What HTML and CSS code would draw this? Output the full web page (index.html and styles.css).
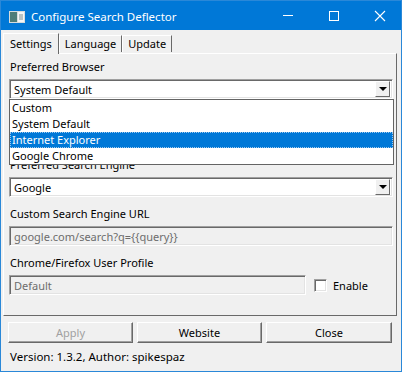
FILE: index.html
```html
<!DOCTYPE html>
<html lang="en">

<head>
    <meta charset="UTF-8">
    <meta name="viewport" content="width=device-width, initial-scale=1.0">
    <title>Configure Search Deflector</title>
    <link rel="stylesheet" href="styles.css">
</head>

<body>
    <div class="window">
        <div class="titlebar">
            <svg class="app-icon" width="16" height="12" viewBox="0 0 16 12">
                <rect x="0" y="0" width="16" height="12" fill="#d6dcdc" />
                <rect x="1" y="1" width="7" height="10" fill="#4d7d78" />
                <rect x="9" y="1" width="6" height="10" fill="#f4f6f6" />
                <rect x="10" y="3" width="4" height="6" fill="#b9c3c3" />
            </svg>
            <span class="title">Configure Search Deflector</span>
            <div class="controls">
                <svg width="46" height="30" viewBox="0 0 46 30">
                    <line x1="18" y1="14.5" x2="28" y2="14.5" stroke="#fff" stroke-width="1" />
                </svg>
                <svg width="46" height="30" viewBox="0 0 46 30">
                    <rect x="18.5" y="10.5" width="9" height="9" fill="none" stroke="#fff" stroke-width="1" />
                </svg>
                <svg width="46" height="30" viewBox="0 0 46 30">
                    <path d="M18 10 L28 20 M28 10 L18 20" stroke="#fff" stroke-width="1.1" />
                </svg>
            </div>
        </div>

        <div class="content">
            <div class="tabs">
                <div class="tab active">Settings</div>
                <div class="tab">Language</div>
                <div class="tab">Update</div>
            </div>

            <div class="panel">
                <div class="field browser">
                    <label>Preferred Browser</label>
                    <div class="combo">
                        <span>System Default</span>
                        <span class="drop-btn"></span>
                    </div>
                    <ul class="dropdown">
                        <li>Custom</li>
                        <li>System Default</li>
                        <li class="selected">Internet Explorer</li>
                        <li>Google Chrome</li>
                    </ul>
                </div>

                <div class="field">
                    <label>Preferred Search Engine</label>
                    <div class="combo">
                        <span>Google</span>
                        <span class="drop-btn"></span>
                    </div>
                </div>

                <div class="field">
                    <label>Custom Search Engine URL</label>
                    <div class="textbox disabled">google.com/search?q={{query}}</div>
                </div>

                <div class="field">
                    <label>Chrome/Firefox User Profile</label>
                    <div class="profile-row">
                        <div class="textbox disabled">Default</div>
                        <div class="check">
                            <span class="checkbox"></span>
                            <span>Enable</span>
                        </div>
                    </div>
                </div>
            </div>

            <div class="buttons">
                <button class="btn" disabled>Apply</button>
                <button class="btn">Website</button>
                <button class="btn">Close</button>
            </div>

            <div class="footer">Version: 1.3.2, Author: spikespaz</div>
        </div>
    </div>
</body>

</html>
```

FILE: styles.css
```css
body {
    margin: 0;
    padding: 0;
    font-family: "Noto Sans", "Open Sans", sans-serif;
    font-size: 11px;
    color: #000;
}

.window {
    width: 402px;
    height: 372px;
    box-sizing: border-box;
    border: 1px solid #2a88d8;
    background-color: #f0f0f0;
    display: flex;
    flex-direction: column;
}

.titlebar {
    height: 29px;
    background-color: #0078d7;
    display: flex;
    align-items: center;
    color: #fff;
}

.app-icon {
    margin-left: 8px;
    margin-right: 6px;
    margin-top: 2px;
}

.title {
    flex: 1;
    font-size: 11.5px;
    margin-top: 1px;
}

.controls {
    display: flex;
    margin-right: -2px;
}

.controls svg {
    display: block;
}

.content {
    padding: 3px 4px 0 2px;
    display: flex;
    flex-direction: column;
}

.tabs {
    display: flex;
    align-items: flex-end;
    height: 20px;
    position: relative;
    z-index: 1;
}

.tab {
    height: 17px;
    line-height: 16px;
    padding: 0 5px;
    box-sizing: border-box;
    border-top: 1px solid #fff;
    border-left: 1px solid #fff;
    border-right: 1px solid #696969;
    margin-bottom: 1px;
}

.tab.active {
    height: 21px;
    line-height: 19px;
    padding: 0 6px 0 6px;
    margin-bottom: -1px;
    background-color: #f0f0f0;
}

.panel {
    height: 263px;
    box-sizing: border-box;
    border: 1px solid;
    border-color: #fff #696969 #696969 #fff;
    padding: 5px 3px 0 5px;
    display: flex;
    flex-direction: column;
    gap: 9px;
}

.field {
    display: flex;
    flex-direction: column;
    gap: 4px;
    position: relative;
}

.field.browser {
    margin-bottom: 49px;
}

.field label {
    line-height: 16px;
    height: 16px;
    padding-left: 1px;
}

.combo,
.textbox {
    height: 20px;
    box-sizing: border-box;
    border: 1px solid;
    border-color: #a0a0a0 #fff #fff #a0a0a0;
    box-shadow: inset 1px 1px #696969, inset -1px -1px #e3e3e3;
    background-color: #fff;
    display: flex;
    align-items: center;
    padding-left: 4px;
}

.combo {
    justify-content: space-between;
    padding-right: 2px;
}

.drop-btn {
    width: 15px;
    height: 16px;
    box-sizing: border-box;
    border: 1px solid;
    border-color: #fff #696969 #696969 #fff;
    background-color: #f0f0f0;
    position: relative;
}

.drop-btn::after {
    content: "";
    position: absolute;
    left: 3px;
    top: 5px;
    border-left: 4px solid transparent;
    border-right: 4px solid transparent;
    border-top: 4px solid #000;
}

.textbox.disabled {
    background-color: #f0f0f0;
    color: #6d6d6d;
}

.dropdown {
    position: absolute;
    left: 0;
    right: -1px;
    top: 40px;
    margin: 0;
    padding: 0;
    list-style: none;
    background-color: #fff;
    border: 1px solid #646464;
    z-index: 2;
}

.dropdown li {
    height: 16px;
    line-height: 15px;
    padding-left: 2px;
}

.dropdown li.selected {
    background-color: #0078d7;
    color: #fff;
    outline: 1px dotted #9ec9ee;
    outline-offset: -1px;
}

.profile-row {
    display: flex;
    align-items: center;
}

.profile-row .textbox {
    width: 297px;
}

.check {
    display: flex;
    align-items: center;
    gap: 6px;
    margin-left: 8px;
}

.checkbox {
    width: 13px;
    height: 13px;
    box-sizing: border-box;
    border: 1px solid;
    border-color: #a0a0a0 #fff #fff #a0a0a0;
    box-shadow: inset 1px 1px #696969, inset -1px -1px #e3e3e3;
    background-color: #fff;
}

.buttons {
    display: grid;
    grid-template-columns: 125px 125px 126px;
    gap: 4px;
    padding: 6px 0 0 5px;
}

.btn {
    height: 21px;
    font-family: inherit;
    font-size: 11px;
    background-color: #f0f0f0;
    border: 1px solid;
    border-color: #fff #696969 #696969 #fff;
    box-shadow: inset -1px -1px #a0a0a0;
    padding: 0;
    color: #000;
}

.btn:disabled {
    color: #a0a0a0;
}

.footer {
    padding: 6px 0 0 7px;
    line-height: 16px;
    font-size: 11.5px;
}
```
